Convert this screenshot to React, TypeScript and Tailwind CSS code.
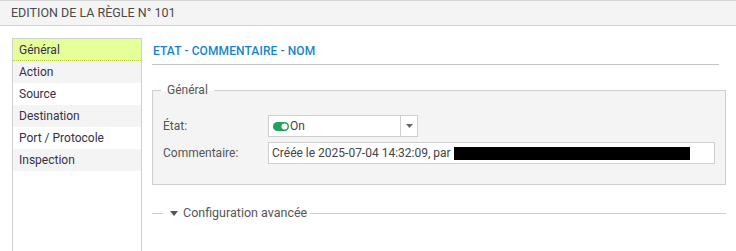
import React from "react";

const items = [
  { label: "Général", cls: "bg-[#e5ff99] border-b border-dotted border-[#b8d431]" },
  { label: "Action", cls: "bg-[#f4f4f4]" },
  { label: "Source", cls: "bg-white" },
  { label: "Destination", cls: "bg-[#f4f4f4]" },
  { label: "Port / Protocole", cls: "bg-white" },
  { label: "Inspection", cls: "bg-[#f4f4f4]" },
];

export default function App() {
  return (
    <div
      className="w-[736px] h-[251px] bg-white overflow-hidden flex flex-col"
      style={{ fontFamily: "Roboto, 'Liberation Sans', sans-serif" }}
    >
      <div className="h-[26px] shrink-0 bg-[#f4f4f4] border-t border-b border-[#d4d4d4] flex items-center pl-[11px] text-[12.5px] text-[#4a4a4a]">
        EDITION DE LA RÈGLE N° 101
      </div>
      <div className="flex flex-1 pt-[12px] pl-[12px]">
        <div className="w-[130px] border-l border-r border-t border-[#d0d0d0] flex flex-col">
          {items.map((it) => (
            <div
              key={it.label}
              className={`h-[22px] flex items-center pl-[6px] text-[12px] text-[#35304a] ${it.cls}`}
            >
              {it.label}
            </div>
          ))}
        </div>
        <div className="flex-1 pl-[10px] pr-[10px] flex flex-col">
          <div className="w-[567px] h-[27px] border-b border-[#c4c4c4] flex items-end pb-[4px] pl-[1px] text-[12px] font-medium text-[#1a84c8] tracking-[0.1px]">
            ETAT - COMMENTAIRE - NOM
          </div>
          <div className="relative mt-[25px] h-[95px] w-[574px] bg-[#f4f4f4] border border-[#cfcfcf]">
            <div className="absolute left-[8px] top-[-9px] px-[6px] bg-[linear-gradient(to_bottom,#ffffff_0,#ffffff_9px,#f4f4f4_9px)] text-[12px] text-[#555] leading-[16px]">
              Général
            </div>
            <div className="flex flex-col pt-[24px] pl-[10px] gap-[5px]">
              <div className="flex items-center h-[22px]">
                <div className="w-[105px] text-[12px] text-[#555]">État:</div>
                <div className="w-[150px] h-[22px] bg-white border border-[#cfcfcf] flex items-center">
                  <div className="flex-1 flex items-center pl-[4px]">
                    <svg width="16" height="9" viewBox="0 0 16 9">
                      <rect x="0" y="0" width="16" height="9" rx="4.5" fill="#20a35a" />
                      <circle cx="11.5" cy="4.5" r="3" fill="#fff" />
                    </svg>
                    <span className="text-[12px] text-[#444] ml-[1px]">On</span>
                  </div>
                  <div className="w-[17px] h-full border-l border-[#cfcfcf] flex items-center justify-center">
                    <svg width="7" height="4" viewBox="0 0 7 4">
                      <path d="M0 0 L7 0 L3.5 4 Z" fill="#666" />
                    </svg>
                  </div>
                </div>
              </div>
              <div className="flex items-center h-[22px]">
                <div className="w-[105px] text-[12px] text-[#555]">Commentaire:</div>
                <div className="w-[447px] h-[22px] bg-white border border-[#cfcfcf] flex items-center pl-[3px] text-[12px] text-[#444] whitespace-nowrap">
                  Créée le 2025-07-04 14:32:09, par
                  <span className="inline-block ml-[3px] w-[236px] h-[13px] bg-black" />
                </div>
              </div>
            </div>
          </div>
          <div className="mt-[20px] w-[574px] flex items-center h-[16px]">
            <div className="w-[11px] border-t border-[#cfcfcf]" />
            <svg width="8" height="5" viewBox="0 0 8 5" className="ml-[7px]">
              <path d="M0 0 L8 0 L4 5 Z" fill="#555" />
            </svg>
            <span className="ml-[5px] mr-[3px] text-[12.5px] text-[#555]">Configuration avancée</span>
            <div className="flex-1 border-t border-[#cfcfcf]" />
          </div>
        </div>
      </div>
    </div>
  );
}
